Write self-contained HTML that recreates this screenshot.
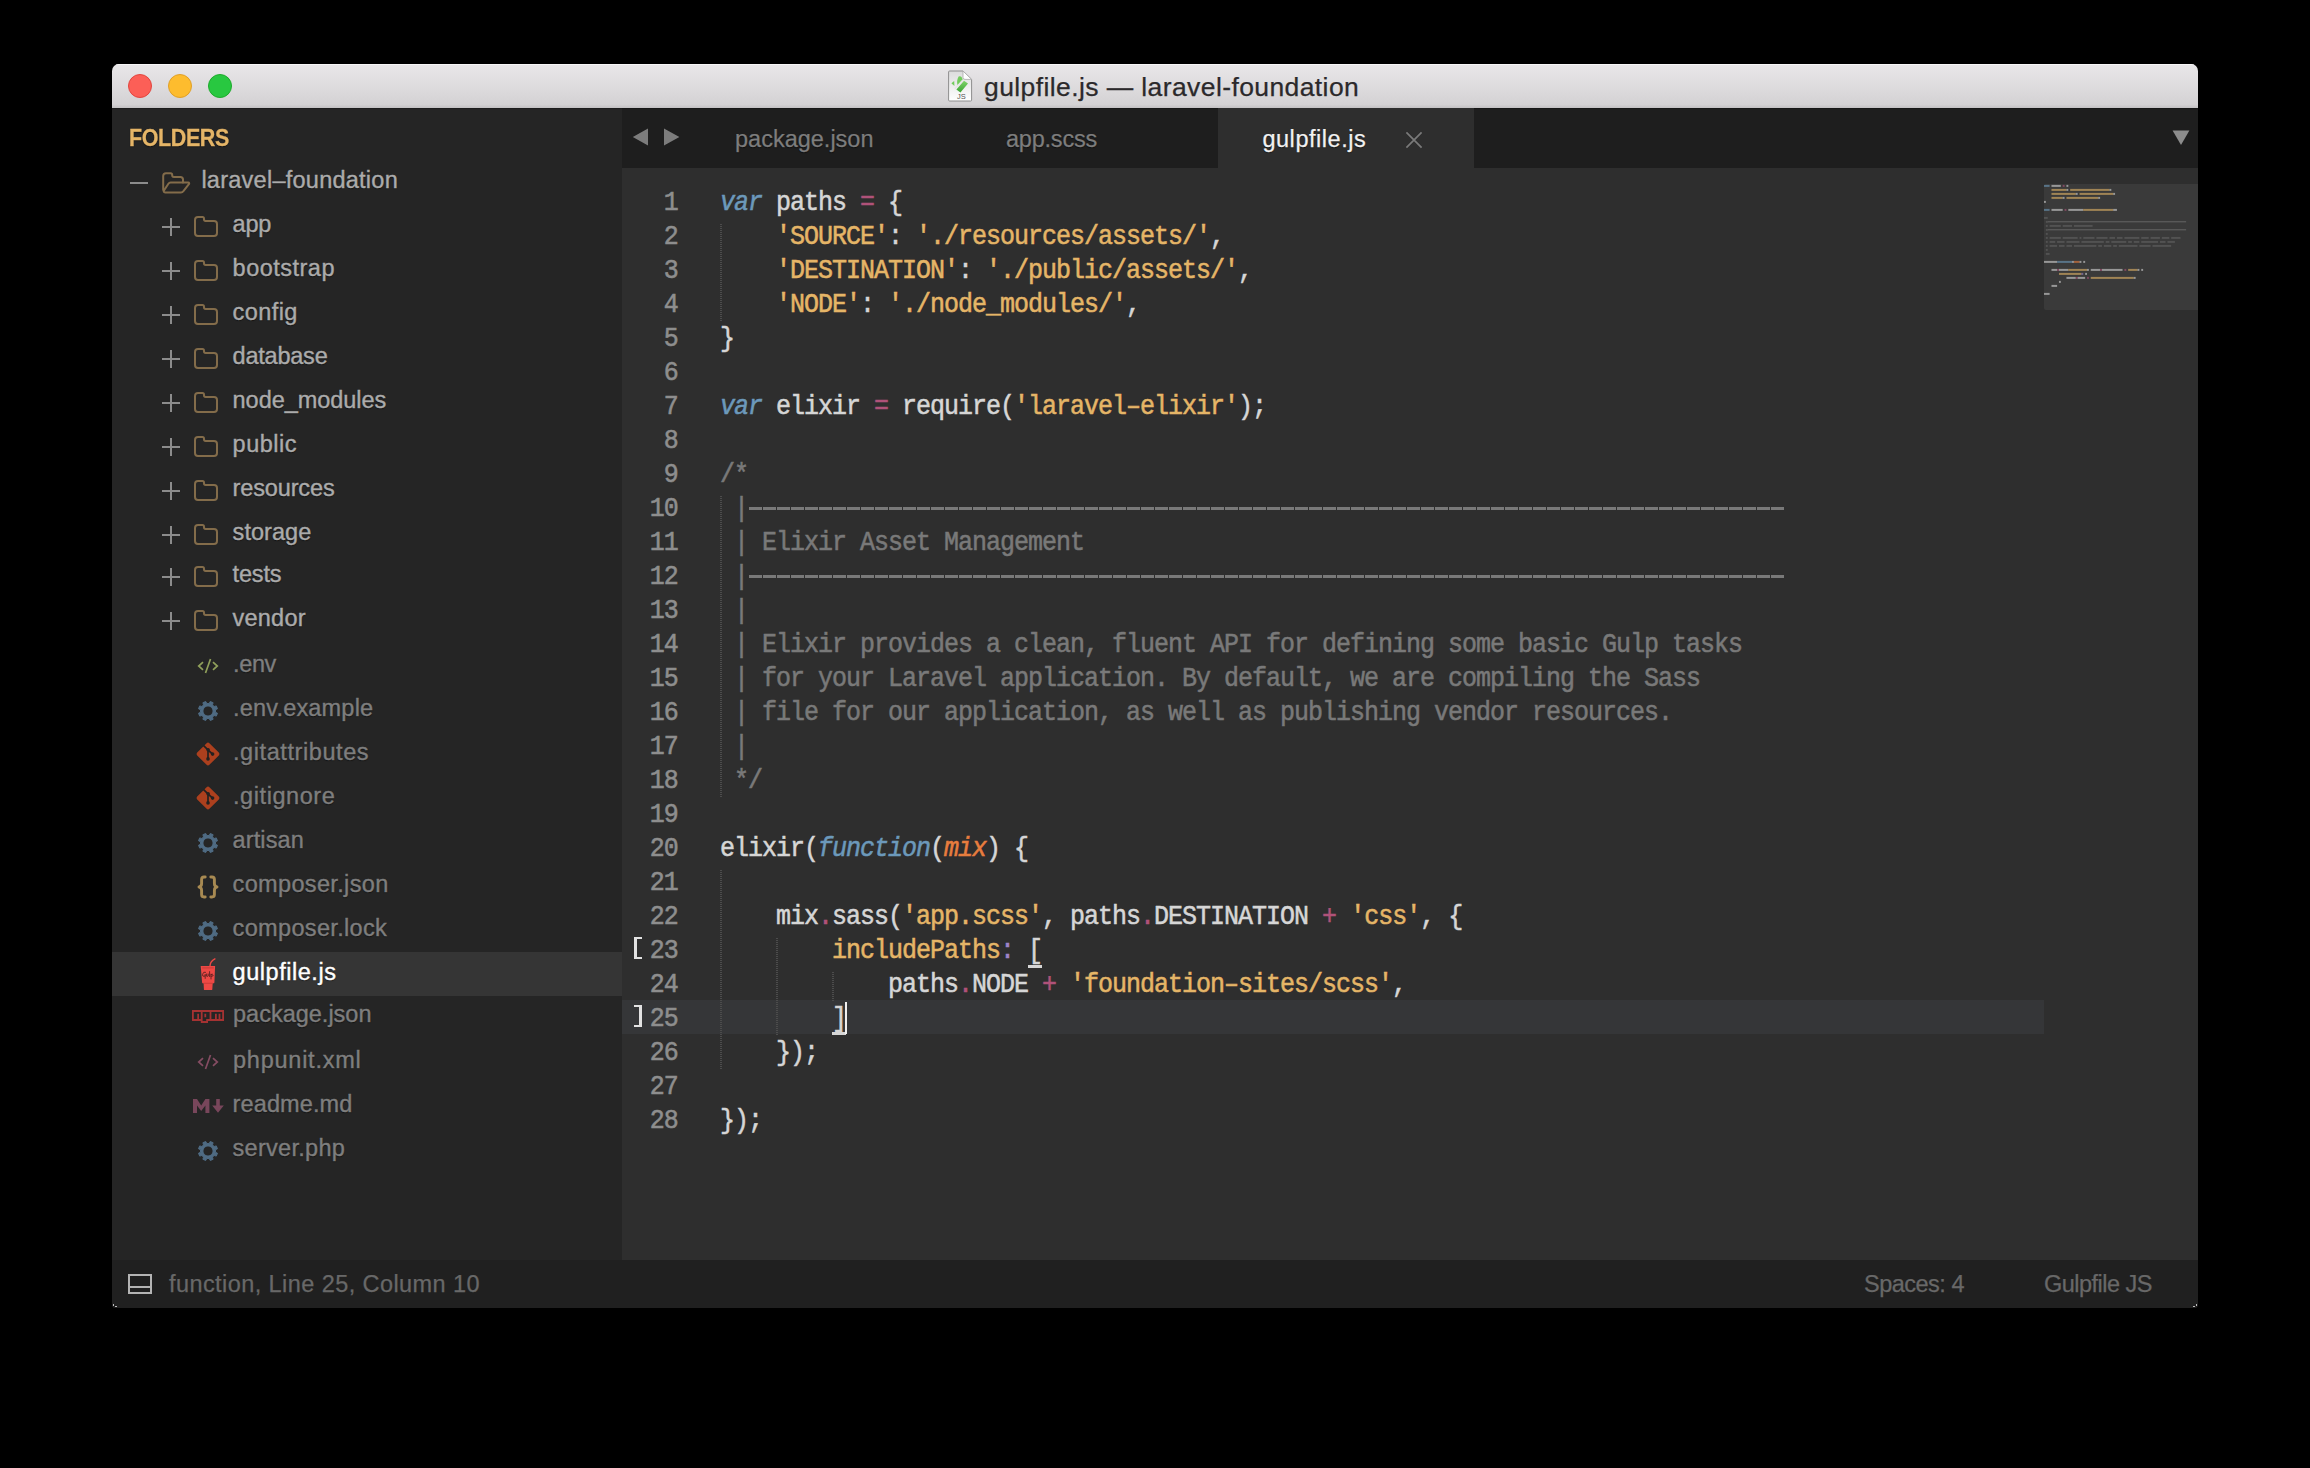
<!DOCTYPE html><html><head><meta charset="utf-8"><title>gulpfile.js</title><style>

html,body{margin:0;padding:0}
body{width:2310px;height:1468px;background:#000;position:relative;overflow:hidden;font-family:"Liberation Sans", sans-serif}
div,span,svg{position:absolute;box-sizing:border-box}
.t{white-space:pre;line-height:1;-webkit-text-stroke:0.25px}
.ln,.cl{font-family:"Liberation Mono", monospace;font-size:25.0px;letter-spacing:-1.0024px;white-space:pre;line-height:34px;height:34px;transform:translateY(2.6px) scaleY(1.12);transform-origin:0 23.7px}
.cl span{position:static}
.cl,.ln{-webkit-text-stroke:0.5px}
.ln{color:#8e8e8e;text-align:right;width:80px;left:485.802px}
.st{color:#6c99bb;font-style:italic} .par{color:#e87d3e;font-style:italic}
.fg{color:#d6d6d6} .com{color:#797979} .str{color:#e5b567} .kw{color:#b05279} .pur{color:#9e86c8}
.lab{-webkit-text-stroke:0.4px;font-size:23.5px;white-space:pre;line-height:28px;height:28px;text-shadow:0 1px 1px rgba(0,0,0,.55)}
.fo{color:#ababab} .fi{color:#7e7e7e} .sel{color:#fff}

</style></head><body>
<div id="win" style="left:112px;top:64px;width:2086px;height:1244px;border-radius:7px 7px 4px 4px;overflow:hidden;background:#2e2e2e">
<div style="left:0;top:0;width:2086px;height:44px;background:linear-gradient(#e9e7e9 0,#d4d2d4 92%,#c4c2c4 100%);box-shadow:inset 0 1px 0 #f7f6f7"></div>
<div style="left:16px;top:10px;width:24px;height:24px;border-radius:50%;background:#fc5f57;border:1px solid #e2463f"></div>
<div style="left:56px;top:10px;width:24px;height:24px;border-radius:50%;background:#fdbc2e;border:1px solid #e0a028"></div>
<div style="left:96px;top:10px;width:24px;height:24px;border-radius:50%;background:#28c840;border:1px solid #1eab2c"></div>
<svg style="left:835.5px;top:5.5px" width="25" height="32" viewBox="0 0 25 32"><defs><linearGradient id="dg" x1="0" y1="0" x2="0" y2="1"><stop offset="0" stop-color="#dcdcdc"/><stop offset="1" stop-color="#ffffff"/></linearGradient><linearGradient id="gg" x1="0" y1="0" x2="0" y2="1"><stop offset="0" stop-color="#7ed368"/><stop offset="1" stop-color="#3da535"/></linearGradient></defs><path d="M1.6 1 H15 L23.6 9.4 V30 Q23.6 31 22.6 31 H1.6 Q0.6 31 0.6 30 V2 Q0.6 1 1.6 1 Z" fill="url(#dg)" stroke="#8e8e8e" stroke-width="1"/><path d="M15 1 V7.4 Q15 9.4 17 9.4 H23.6 Z" fill="#fff" stroke="#a8a8a8" stroke-width=".8"/><path d="M10.6 6.6 Q13.6 5.4 14.6 9.6 L9.6 15.6 Q8.2 11.2 10.6 6.6 Z" fill="#72cc5c"/><path d="M3.4 13.2 L6.2 11 L6.4 16 Z" fill="#72cc5c"/><path d="M16 10.8 L20 13.6 L12.4 22.4 L8.4 19.6 Z" fill="url(#gg)"/><path d="M6.8 18.8 L14.6 10.4" stroke="#e6e6e6" stroke-width="1.4"/><text x="9" y="29" font-family="Liberation Sans" font-size="7.5" fill="#555">JS</text></svg>
<div class="t" id="title" style="left:872px;top:8px;font-size:26.5px;line-height:30px;color:#2b292b;letter-spacing:0.4px">gulpfile.js — laravel-foundation</div>
<div id="side" style="left:0;top:44px;width:510px;height:1152px;background:#252525;box-shadow:inset 0 1px 0 #1d1d1d"></div>
<div id="tabs" style="left:510px;top:44px;width:1576px;height:60px;background:#1e1e1e;box-shadow:inset 0 1px 0 #171717"></div>
<div id="atab" style="left:1106px;top:44px;width:256px;height:60px;background:#2e2e2e"></div>
<div id="status" style="left:0;top:1196px;width:2086px;height:48px;background:#202020"></div>
<div class="t" style="left:17px;top:62.5px;font-size:21.5px;letter-spacing:-0.4px;font-weight:bold;color:#e5b567;line-height:24px;transform:scaleY(1.08);transform-origin:0 20px;text-shadow:0 1px 1px rgba(0,0,0,.5)">FOLDERS</div>
<div style="left:18px;top:118px;width:18px;height:2px;background:#8c8c8c"></div>
<svg style="left:50px;top:108.4px" width="29" height="22" viewBox="0 0 29 22"><path d="M1.2 18 V4 Q1.2 1.2 4 1.2 H8.6 Q10.2 1.2 10.2 3 V3.6 Q10.2 5 11.8 5 H18.4 Q21 5 21 7.6 V10.4" fill="none" stroke="#836c4a" stroke-width="2" stroke-linejoin="round" stroke-linecap="round"/><path d="M8.6 10.6 H26.2 Q27.8 10.8 26.9 12.2 L21.4 19.2 Q20.4 20.4 19 20.4 H3.2 Q1 20.2 2 18.4 L6.4 11.8 Q7.2 10.6 8.6 10.6 Z" fill="none" stroke="#836c4a" stroke-width="2" stroke-linejoin="round"/></svg>
<div class="lab fo" style="left:89.4px;top:102px;letter-spacing:0.252px">laravel–foundation</div>
<div style="left:50px;top:162px;width:18px;height:2px;background:#8c8c8c"></div><div style="left:58px;top:154px;width:2px;height:18px;background:#8c8c8c"></div>
<svg style="left:82px;top:152.2px" width="24" height="21" viewBox="0 0 24 21"><path d="M1 4 Q1 1 4 1 H8.5 Q10 1 10 2.8 V3.6 Q10 5 11.6 5 H20 Q23 5 23 8 V17 Q23 20 20 20 H4 Q1 20 1 17 Z" fill="none" stroke="#836c4a" stroke-width="2" stroke-linejoin="round"/></svg>
<div class="lab fo" style="left:120.6px;top:146px;letter-spacing:-0.273px">app</div>
<div style="left:50px;top:206px;width:18px;height:2px;background:#8c8c8c"></div><div style="left:58px;top:198px;width:2px;height:18px;background:#8c8c8c"></div>
<svg style="left:82px;top:196.2px" width="24" height="21" viewBox="0 0 24 21"><path d="M1 4 Q1 1 4 1 H8.5 Q10 1 10 2.8 V3.6 Q10 5 11.6 5 H20 Q23 5 23 8 V17 Q23 20 20 20 H4 Q1 20 1 17 Z" fill="none" stroke="#836c4a" stroke-width="2" stroke-linejoin="round"/></svg>
<div class="lab fo" style="left:120.6px;top:190px;letter-spacing:0.491px">bootstrap</div>
<div style="left:50px;top:250px;width:18px;height:2px;background:#8c8c8c"></div><div style="left:58px;top:242px;width:2px;height:18px;background:#8c8c8c"></div>
<svg style="left:82px;top:240.2px" width="24" height="21" viewBox="0 0 24 21"><path d="M1 4 Q1 1 4 1 H8.5 Q10 1 10 2.8 V3.6 Q10 5 11.6 5 H20 Q23 5 23 8 V17 Q23 20 20 20 H4 Q1 20 1 17 Z" fill="none" stroke="#836c4a" stroke-width="2" stroke-linejoin="round"/></svg>
<div class="lab fo" style="left:120.6px;top:234px;letter-spacing:0.414px">config</div>
<div style="left:50px;top:294px;width:18px;height:2px;background:#8c8c8c"></div><div style="left:58px;top:286px;width:2px;height:18px;background:#8c8c8c"></div>
<svg style="left:82px;top:284.2px" width="24" height="21" viewBox="0 0 24 21"><path d="M1 4 Q1 1 4 1 H8.5 Q10 1 10 2.8 V3.6 Q10 5 11.6 5 H20 Q23 5 23 8 V17 Q23 20 20 20 H4 Q1 20 1 17 Z" fill="none" stroke="#836c4a" stroke-width="2" stroke-linejoin="round"/></svg>
<div class="lab fo" style="left:120.6px;top:278px;letter-spacing:-0.225px">database</div>
<div style="left:50px;top:338px;width:18px;height:2px;background:#8c8c8c"></div><div style="left:58px;top:330px;width:2px;height:18px;background:#8c8c8c"></div>
<svg style="left:82px;top:328.2px" width="24" height="21" viewBox="0 0 24 21"><path d="M1 4 Q1 1 4 1 H8.5 Q10 1 10 2.8 V3.6 Q10 5 11.6 5 H20 Q23 5 23 8 V17 Q23 20 20 20 H4 Q1 20 1 17 Z" fill="none" stroke="#836c4a" stroke-width="2" stroke-linejoin="round"/></svg>
<div class="lab fo" style="left:120.6px;top:322px;letter-spacing:-0.041px">node_modules</div>
<div style="left:50px;top:382px;width:18px;height:2px;background:#8c8c8c"></div><div style="left:58px;top:374px;width:2px;height:18px;background:#8c8c8c"></div>
<svg style="left:82px;top:372.2px" width="24" height="21" viewBox="0 0 24 21"><path d="M1 4 Q1 1 4 1 H8.5 Q10 1 10 2.8 V3.6 Q10 5 11.6 5 H20 Q23 5 23 8 V17 Q23 20 20 20 H4 Q1 20 1 17 Z" fill="none" stroke="#836c4a" stroke-width="2" stroke-linejoin="round"/></svg>
<div class="lab fo" style="left:120.6px;top:366px;letter-spacing:0.499px">public</div>
<div style="left:50px;top:426px;width:18px;height:2px;background:#8c8c8c"></div><div style="left:58px;top:418px;width:2px;height:18px;background:#8c8c8c"></div>
<svg style="left:82px;top:416.2px" width="24" height="21" viewBox="0 0 24 21"><path d="M1 4 Q1 1 4 1 H8.5 Q10 1 10 2.8 V3.6 Q10 5 11.6 5 H20 Q23 5 23 8 V17 Q23 20 20 20 H4 Q1 20 1 17 Z" fill="none" stroke="#836c4a" stroke-width="2" stroke-linejoin="round"/></svg>
<div class="lab fo" style="left:120.6px;top:410px;letter-spacing:-0.143px">resources</div>
<div style="left:50px;top:470px;width:18px;height:2px;background:#8c8c8c"></div><div style="left:58px;top:462px;width:2px;height:18px;background:#8c8c8c"></div>
<svg style="left:82px;top:460.20000000000005px" width="24" height="21" viewBox="0 0 24 21"><path d="M1 4 Q1 1 4 1 H8.5 Q10 1 10 2.8 V3.6 Q10 5 11.6 5 H20 Q23 5 23 8 V17 Q23 20 20 20 H4 Q1 20 1 17 Z" fill="none" stroke="#836c4a" stroke-width="2" stroke-linejoin="round"/></svg>
<div class="lab fo" style="left:120.6px;top:454px;letter-spacing:0.044px">storage</div>
<div style="left:50px;top:512px;width:18px;height:2px;background:#8c8c8c"></div><div style="left:58px;top:504px;width:2px;height:18px;background:#8c8c8c"></div>
<svg style="left:82px;top:502.20000000000005px" width="24" height="21" viewBox="0 0 24 21"><path d="M1 4 Q1 1 4 1 H8.5 Q10 1 10 2.8 V3.6 Q10 5 11.6 5 H20 Q23 5 23 8 V17 Q23 20 20 20 H4 Q1 20 1 17 Z" fill="none" stroke="#836c4a" stroke-width="2" stroke-linejoin="round"/></svg>
<div class="lab fo" style="left:120.6px;top:496px;letter-spacing:-0.168px">tests</div>
<div style="left:50px;top:556px;width:18px;height:2px;background:#8c8c8c"></div><div style="left:58px;top:548px;width:2px;height:18px;background:#8c8c8c"></div>
<svg style="left:82px;top:546.2px" width="24" height="21" viewBox="0 0 24 21"><path d="M1 4 Q1 1 4 1 H8.5 Q10 1 10 2.8 V3.6 Q10 5 11.6 5 H20 Q23 5 23 8 V17 Q23 20 20 20 H4 Q1 20 1 17 Z" fill="none" stroke="#836c4a" stroke-width="2" stroke-linejoin="round"/></svg>
<div class="lab fo" style="left:120.6px;top:540px;letter-spacing:0.207px">vendor</div>
<svg style="left:85px;top:592.5px" width="22" height="18" viewBox="-11 -9 22 18"><path d="M-5 -3.9 L-9.3 0 L-5 3.9 M5 -3.9 L9.3 0 L5 3.9 M2.5 -7 L-2.5 7" fill="none" stroke="#8f9f5a" stroke-width="1.7"/></svg>
<div class="lab fi" style="left:121.0px;top:586px;letter-spacing:-0.355px">.env</div>
<svg style="left:85px;top:636px" width="22" height="22" viewBox="0 0 22 22"><path d="M12.19 3.49 L13.25 1.51 L16.12 2.70 L15.46 4.85 L17.15 6.54 L19.30 5.88 L20.49 8.75 L18.51 9.81 L18.51 12.19 L20.49 13.25 L19.30 16.12 L17.15 15.46 L15.46 17.15 L16.12 19.30 L13.25 20.49 L12.19 18.51 L9.81 18.51 L8.75 20.49 L5.88 19.30 L6.54 17.15 L4.85 15.46 L2.70 16.12 L1.51 13.25 L3.49 12.19 L3.49 9.81 L1.51 8.75 L2.70 5.88 L4.85 6.54 L6.54 4.85 L5.88 2.70 L8.75 1.51 L9.81 3.49 Z M11 5.9 A5.1 5.1 0 1 0 11 16.1 A5.1 5.1 0 1 0 11 5.9 Z" fill="#4f6b83" fill-rule="evenodd" stroke="#4f6b83" stroke-width="1" stroke-linejoin="round"/></svg>
<div class="lab fi" style="left:121.0px;top:630px;letter-spacing:0.189px">.env.example</div>
<svg style="left:84px;top:678.2px" width="24" height="24" viewBox="0 0 24 24"><path d="M12 0.6 Q12.8 0.6 13.4 1.2 L22.8 10.6 Q23.4 11.2 23.4 12 Q23.4 12.8 22.8 13.4 L13.4 22.8 Q12.8 23.4 12 23.4 Q11.2 23.4 10.6 22.8 L1.2 13.4 Q0.6 12.8 0.6 12 Q0.6 11.2 1.2 10.6 L10.6 1.2 Q11.2 0.6 12 0.6 Z" fill="#ac401e"/><path d="M7.6 3.6 L12 7.8 V16.8 M12.2 8.2 L16.4 12" fill="none" stroke="#232120" stroke-width="1.7"/><circle cx="12.1" cy="7.7" r="1.8" fill="#232120"/><circle cx="12" cy="16.9" r="1.8" fill="#232120"/><circle cx="16.6" cy="12.1" r="1.8" fill="#232120"/></svg>
<div class="lab fi" style="left:121.0px;top:674px;letter-spacing:0.585px">.gitattributes</div>
<svg style="left:84px;top:722.2px" width="24" height="24" viewBox="0 0 24 24"><path d="M12 0.6 Q12.8 0.6 13.4 1.2 L22.8 10.6 Q23.4 11.2 23.4 12 Q23.4 12.8 22.8 13.4 L13.4 22.8 Q12.8 23.4 12 23.4 Q11.2 23.4 10.6 22.8 L1.2 13.4 Q0.6 12.8 0.6 12 Q0.6 11.2 1.2 10.6 L10.6 1.2 Q11.2 0.6 12 0.6 Z" fill="#ac401e"/><path d="M7.6 3.6 L12 7.8 V16.8 M12.2 8.2 L16.4 12" fill="none" stroke="#232120" stroke-width="1.7"/><circle cx="12.1" cy="7.7" r="1.8" fill="#232120"/><circle cx="12" cy="16.9" r="1.8" fill="#232120"/><circle cx="16.6" cy="12.1" r="1.8" fill="#232120"/></svg>
<div class="lab fi" style="left:121.0px;top:718px;letter-spacing:0.571px">.gitignore</div>
<svg style="left:85px;top:768px" width="22" height="22" viewBox="0 0 22 22"><path d="M12.19 3.49 L13.25 1.51 L16.12 2.70 L15.46 4.85 L17.15 6.54 L19.30 5.88 L20.49 8.75 L18.51 9.81 L18.51 12.19 L20.49 13.25 L19.30 16.12 L17.15 15.46 L15.46 17.15 L16.12 19.30 L13.25 20.49 L12.19 18.51 L9.81 18.51 L8.75 20.49 L5.88 19.30 L6.54 17.15 L4.85 15.46 L2.70 16.12 L1.51 13.25 L3.49 12.19 L3.49 9.81 L1.51 8.75 L2.70 5.88 L4.85 6.54 L6.54 4.85 L5.88 2.70 L8.75 1.51 L9.81 3.49 Z M11 5.9 A5.1 5.1 0 1 0 11 16.1 A5.1 5.1 0 1 0 11 5.9 Z" fill="#4f6b83" fill-rule="evenodd" stroke="#4f6b83" stroke-width="1" stroke-linejoin="round"/></svg>
<div class="lab fi" style="left:120.6px;top:762px;letter-spacing:0.108px">artisan</div>
<svg style="left:85px;top:811px" width="22" height="24" viewBox="0 0 22 24"><path d="M8.2 2 H7 Q4.6 2 4.6 4.4 V8.6 Q4.6 11.6 2 12 Q4.6 12.4 4.6 15.4 V19.6 Q4.6 22 7 22 H8.2" fill="none" stroke="#a88a52" stroke-width="2.9" stroke-linecap="round" stroke-linejoin="round"/><path d="M13.8 2 H15 Q17.4 2 17.4 4.4 V8.6 Q17.4 11.6 20 12 Q17.4 12.4 17.4 15.4 V19.6 Q17.4 22 15 22 H13.8" fill="none" stroke="#a88a52" stroke-width="2.9" stroke-linecap="round" stroke-linejoin="round"/></svg>
<div class="lab fi" style="left:120.6px;top:806px;letter-spacing:0.344px">composer.json</div>
<svg style="left:85px;top:856px" width="22" height="22" viewBox="0 0 22 22"><path d="M12.19 3.49 L13.25 1.51 L16.12 2.70 L15.46 4.85 L17.15 6.54 L19.30 5.88 L20.49 8.75 L18.51 9.81 L18.51 12.19 L20.49 13.25 L19.30 16.12 L17.15 15.46 L15.46 17.15 L16.12 19.30 L13.25 20.49 L12.19 18.51 L9.81 18.51 L8.75 20.49 L5.88 19.30 L6.54 17.15 L4.85 15.46 L2.70 16.12 L1.51 13.25 L3.49 12.19 L3.49 9.81 L1.51 8.75 L2.70 5.88 L4.85 6.54 L6.54 4.85 L5.88 2.70 L8.75 1.51 L9.81 3.49 Z M11 5.9 A5.1 5.1 0 1 0 11 16.1 A5.1 5.1 0 1 0 11 5.9 Z" fill="#4f6b83" fill-rule="evenodd" stroke="#4f6b83" stroke-width="1" stroke-linejoin="round"/></svg>
<div class="lab fi" style="left:120.6px;top:850px;letter-spacing:0.338px">composer.lock</div>
<div style="left:0;top:888px;width:510px;height:44px;background:#353535"></div>
<svg style="left:88px;top:893.8px" width="17" height="34" viewBox="0 0 17 34"><path d="M9.9 8.6 Q10.2 5.2 11.2 4 Q12.6 2.2 14.9 0.9" fill="none" stroke="#ee4945" stroke-width="1.4" stroke-linecap="round"/><path d="M0.7 8 H15.1 L14.4 24.4 Q14.3 25.2 13.4 25.3 H12.7 L12.3 31.4 Q12.2 32.1 11.4 32.1 H4.8 Q4 32.1 3.9 31.4 L3.6 25.3 H3 Q2.2 25.2 2.1 24.4 Z" fill="#ee4945"/><path d="M2.2 9.9 H13.8" stroke="#b93531" stroke-width="0.7" fill="none"/><path d="M3.6 25.3 H12.7" stroke="#c53a36" stroke-width="0.8" fill="none"/><path d="M5.6 14.2 Q3.4 13.2 2.6 16.2 Q2.2 18.6 4.2 18.4 Q5.4 18 5.2 16.4 V20.4 M6.6 16 V18.2 Q7.4 18.8 8.2 18 V16 M9.6 13.6 V18.6 M11 16.2 V21 M11 16.6 Q12.6 15.4 13.2 17 Q13.2 18.6 11.2 18.4" fill="none" stroke="#5b2020" stroke-width="0.9" stroke-linecap="round"/></svg>
<div class="lab sel" style="left:120.6px;top:894px;letter-spacing:0.538px">gulpfile.js</div>
<svg style="left:80px;top:946.0px" width="32" height="14" viewBox="0 0 32 14"><path d="M0 0 H32 V11 H16 V13 H8.8 V11 H0 Z" fill="#a53232"/><path d="M1.8 1.9 H8.8 V9.1 H7 V3.8 H5.3 V9.1 H1.8 Z M10.6 1.9 H17.6 V9.1 H14.2 V11 H10.6 Z M12.4 3.8 V7.2 H14.2 V3.8 Z M19.4 1.9 H30.2 V9.1 H28.4 V3.8 H26.6 V9.1 H24.8 V3.8 H23 V9.1 H19.4 Z" fill="#252525" fill-rule="evenodd"/></svg>
<div class="lab fi" style="left:121.0px;top:936px;letter-spacing:0.000px">package.json</div>
<svg style="left:85px;top:988.5px" width="22" height="18" viewBox="-11 -9 22 18"><path d="M-5 -3.9 L-9.3 0 L-5 3.9 M5 -3.9 L9.3 0 L5 3.9 M2.5 -7 L-2.5 7" fill="none" stroke="#844c62" stroke-width="1.7"/></svg>
<div class="lab fi" style="left:121.0px;top:982px;letter-spacing:0.756px">phpunit.xml</div>
<svg style="left:80.5px;top:1035px" width="31" height="14" viewBox="0 0 31 14"><path d="M0 14 V0 H4 L8.2 6.4 L12.4 0 H16.4 V14 H12.4 V6.4 L8.2 12 L4 6.4 V14 Z" fill="#78465b"/><path d="M23.2 0 H26.8 V6.6 H30.8 L25 13.8 L19.2 6.6 H23.2 Z" fill="#78465b"/></svg>
<div class="lab fi" style="left:120.6px;top:1026px;letter-spacing:0.116px">readme.md</div>
<svg style="left:85px;top:1076px" width="22" height="22" viewBox="0 0 22 22"><path d="M12.19 3.49 L13.25 1.51 L16.12 2.70 L15.46 4.85 L17.15 6.54 L19.30 5.88 L20.49 8.75 L18.51 9.81 L18.51 12.19 L20.49 13.25 L19.30 16.12 L17.15 15.46 L15.46 17.15 L16.12 19.30 L13.25 20.49 L12.19 18.51 L9.81 18.51 L8.75 20.49 L5.88 19.30 L6.54 17.15 L4.85 15.46 L2.70 16.12 L1.51 13.25 L3.49 12.19 L3.49 9.81 L1.51 8.75 L2.70 5.88 L4.85 6.54 L6.54 4.85 L5.88 2.70 L8.75 1.51 L9.81 3.49 Z M11 5.9 A5.1 5.1 0 1 0 11 16.1 A5.1 5.1 0 1 0 11 5.9 Z" fill="#4f6b83" fill-rule="evenodd" stroke="#4f6b83" stroke-width="1" stroke-linejoin="round"/></svg>
<div class="lab fi" style="left:120.6px;top:1070px;letter-spacing:0.277px">server.php</div>
<svg style="left:520px;top:64px" width="50" height="18" viewBox="0 0 50 18"><path d="M16 0.6 V17.4 L0.8 9 Z M32 0.6 V17.4 L47.4 9 Z" fill="#7c7c7c"/></svg>
<div class="t" style="left:623.0px;top:61px;font-size:23.5px;line-height:28px;color:#7d7d7d;letter-spacing:0.000px;text-shadow:0 1px 1px rgba(0,0,0,.6)">package.json</div>
<div class="t" style="left:894.0px;top:61px;font-size:23.5px;line-height:28px;color:#7d7d7d;letter-spacing:-0.219px;text-shadow:0 1px 1px rgba(0,0,0,.6)">app.scss</div>
<div class="t" style="left:1150.4px;top:61px;font-size:23.5px;line-height:28px;color:#f2f2f2;letter-spacing:0.547px;text-shadow:0 1px 1px rgba(0,0,0,.6)">gulpfile.js</div>
<svg style="left:1293px;top:67px" width="18" height="18" viewBox="0 0 18 18"><path d="M1.4 1.4 L16.6 16.6 M16.6 1.4 L1.4 16.6" stroke="#7a7a7a" stroke-width="1.7" fill="none"/></svg>
<svg style="left:2060px;top:66px" width="18" height="16" viewBox="0 0 18 16"><path d="M0.6 0.6 H17.4 L9 15 Z" fill="#8c8c8c"/></svg>
<div style="left:510px;top:936px;width:1422px;height:34px;background:#353638"></div>
<div style="left:608px;top:160px;width:2px;height:97px;background:repeating-linear-gradient(#4c4c4c 0 1px,transparent 1px 2px)"></div>
<div style="left:608px;top:432px;width:2px;height:301px;background:repeating-linear-gradient(#4c4c4c 0 1px,transparent 1px 2px)"></div>
<div style="left:608px;top:806px;width:2px;height:199px;background:repeating-linear-gradient(#4c4c4c 0 1px,transparent 1px 2px)"></div>
<div style="left:664px;top:874px;width:2px;height:97px;background:repeating-linear-gradient(#4c4c4c 0 1px,transparent 1px 2px)"></div>
<div style="left:720px;top:908px;width:2px;height:29px;background:repeating-linear-gradient(#4c4c4c 0 1px,transparent 1px 2px)"></div>
<div class="ln" style="top:120px">1</div>
<div class="ln" style="top:154px">2</div>
<div class="ln" style="top:188px">3</div>
<div class="ln" style="top:222px">4</div>
<div class="ln" style="top:256px">5</div>
<div class="ln" style="top:290px">6</div>
<div class="ln" style="top:324px">7</div>
<div class="ln" style="top:358px">8</div>
<div class="ln" style="top:392px">9</div>
<div class="ln" style="top:426px">10</div>
<div class="ln" style="top:460px">11</div>
<div class="ln" style="top:494px">12</div>
<div class="ln" style="top:528px">13</div>
<div class="ln" style="top:562px">14</div>
<div class="ln" style="top:596px">15</div>
<div class="ln" style="top:630px">16</div>
<div class="ln" style="top:664px">17</div>
<div class="ln" style="top:698px">18</div>
<div class="ln" style="top:732px">19</div>
<div class="ln" style="top:766px">20</div>
<div class="ln" style="top:800px">21</div>
<div class="ln" style="top:834px">22</div>
<div class="ln" style="top:868px">23</div>
<div class="ln" style="top:902px">24</div>
<div class="ln" style="top:936px">25</div>
<div class="ln" style="top:970px">26</div>
<div class="ln" style="top:1004px">27</div>
<div class="ln" style="top:1038px">28</div>
<div style="left:522px;top:873px;width:3px;height:22px;background:#e2e2e2"></div>
<div style="left:522px;top:873px;width:8.2px;height:2.4px;background:#e2e2e2"></div>
<div style="left:522px;top:892.6px;width:8.2px;height:2.4px;background:#e2e2e2"></div>
<div style="left:527.2px;top:941px;width:3px;height:22px;background:#e2e2e2"></div>
<div style="left:522px;top:941px;width:8.2px;height:2.4px;background:#e2e2e2"></div>
<div style="left:522px;top:960.5999999999999px;width:8.2px;height:2.4px;background:#e2e2e2"></div>
<div class="cl" style="left:608px;top:120px"><span class="st">var</span><span class="fg"> paths </span><span class="kw">=</span><span class="fg"> {</span></div>
<div class="cl" style="left:608px;top:154px"><span class="fg">    </span><span class="str">'SOURCE'</span><span class="fg">: </span><span class="str">'./resources/assets/'</span><span class="fg">,</span></div>
<div class="cl" style="left:608px;top:188px"><span class="fg">    </span><span class="str">'DESTINATION'</span><span class="fg">: </span><span class="str">'./public/assets/'</span><span class="fg">,</span></div>
<div class="cl" style="left:608px;top:222px"><span class="fg">    </span><span class="str">'NODE'</span><span class="fg">: </span><span class="str">'./node_modules/'</span><span class="fg">,</span></div>
<div class="cl" style="left:608px;top:256px"><span class="fg">}</span></div>
<div class="cl" style="left:608px;top:324px"><span class="st">var</span><span class="fg"> elixir </span><span class="kw">=</span><span class="fg"> require(</span><span class="str">'laravel–elixir'</span><span class="fg">);</span></div>
<div class="cl" style="left:608px;top:392px"><span class="com">/*</span></div>
<div style="left:637.0px;top:443px;width:1035.0px;height:3px;background:repeating-linear-gradient(90deg,#797979 0 13px,transparent 13px 14px)"></div>
<div class="cl" style="left:608px;top:426px"><span class="com"> |</span></div>
<div class="cl" style="left:608px;top:460px"><span class="com"> | Elixir Asset Management</span></div>
<div style="left:637.0px;top:511px;width:1035.0px;height:3px;background:repeating-linear-gradient(90deg,#797979 0 13px,transparent 13px 14px)"></div>
<div class="cl" style="left:608px;top:494px"><span class="com"> |</span></div>
<div class="cl" style="left:608px;top:528px"><span class="com"> |</span></div>
<div class="cl" style="left:608px;top:562px"><span class="com"> | Elixir provides a clean, fluent API for defining some basic Gulp tasks</span></div>
<div class="cl" style="left:608px;top:596px"><span class="com"> | for your Laravel application. By default, we are compiling the Sass</span></div>
<div class="cl" style="left:608px;top:630px"><span class="com"> | file for our application, as well as publishing vendor resources.</span></div>
<div class="cl" style="left:608px;top:664px"><span class="com"> |</span></div>
<div class="cl" style="left:608px;top:698px"><span class="com"> */</span></div>
<div class="cl" style="left:608px;top:766px"><span class="fg">elixir(</span><span class="st">function</span><span class="fg">(</span><span class="par">mix</span><span class="fg">) {</span></div>
<div class="cl" style="left:608px;top:834px"><span class="fg">    mix</span><span class="kw">.</span><span class="fg">sass(</span><span class="str">'app.scss'</span><span class="fg">, paths</span><span class="kw">.</span><span class="fg">DESTINATION </span><span class="kw">+</span><span class="fg"> </span><span class="str">'css'</span><span class="fg">, {</span></div>
<div class="cl" style="left:608px;top:868px"><span class="fg">        </span><span class="str">includePaths</span><span class="pur">:</span><span class="fg"> [</span></div>
<div class="cl" style="left:608px;top:902px"><span class="fg">            paths</span><span class="kw">.</span><span class="fg">NODE </span><span class="kw">+</span><span class="fg"> </span><span class="str">'foundation–sites/scss'</span><span class="fg">,</span></div>
<div class="cl" style="left:608px;top:936px"><span class="fg">        ]</span></div>
<div class="cl" style="left:608px;top:970px"><span class="fg">    });</span></div>
<div class="cl" style="left:608px;top:1038px"><span class="fg">});</span></div>
<div style="left:916px;top:901px;width:14px;height:3px;background:#d6d6d6"></div>
<div style="left:720px;top:968px;width:14px;height:3px;background:#d6d6d6"></div>
<div style="left:732.5px;top:938px;width:2px;height:32px;background:#f0f0f0"></div>
<div style="left:1932px;top:120px;width:154px;height:126px;background:#3a3a3a;border-radius:2px 0 0 2px"></div>
<svg style="left:1932px;top:120px;filter:blur(0.4px)" width="154" height="126" viewBox="0 0 154 126"><rect x="0.00" y="0.90" width="5.61" height="2" fill="#6c99bb" opacity=".6"/><rect x="7.48" y="0.90" width="9.35" height="2" fill="#d6d6d6" opacity=".6"/><rect x="18.70" y="0.90" width="1.87" height="2" fill="#b05279" opacity=".6"/><rect x="22.44" y="0.90" width="1.87" height="2" fill="#d6d6d6" opacity=".6"/><rect x="7.48" y="4.90" width="14.96" height="2" fill="#e5b567" opacity=".6"/><rect x="22.44" y="4.90" width="1.87" height="2" fill="#d6d6d6" opacity=".6"/><rect x="26.18" y="4.90" width="39.27" height="2" fill="#e5b567" opacity=".6"/><rect x="65.45" y="4.90" width="1.87" height="2" fill="#d6d6d6" opacity=".6"/><rect x="7.48" y="8.90" width="24.31" height="2" fill="#e5b567" opacity=".6"/><rect x="31.79" y="8.90" width="1.87" height="2" fill="#d6d6d6" opacity=".6"/><rect x="35.53" y="8.90" width="33.66" height="2" fill="#e5b567" opacity=".6"/><rect x="69.19" y="8.90" width="1.87" height="2" fill="#d6d6d6" opacity=".6"/><rect x="7.48" y="12.90" width="11.22" height="2" fill="#e5b567" opacity=".6"/><rect x="18.70" y="12.90" width="1.87" height="2" fill="#d6d6d6" opacity=".6"/><rect x="22.44" y="12.90" width="31.79" height="2" fill="#e5b567" opacity=".6"/><rect x="54.23" y="12.90" width="1.87" height="2" fill="#d6d6d6" opacity=".6"/><rect x="0.00" y="16.90" width="1.87" height="2" fill="#d6d6d6" opacity=".6"/><rect x="0.00" y="24.90" width="5.61" height="2" fill="#6c99bb" opacity=".6"/><rect x="7.48" y="24.90" width="11.22" height="2" fill="#d6d6d6" opacity=".6"/><rect x="20.57" y="24.90" width="1.87" height="2" fill="#b05279" opacity=".6"/><rect x="24.31" y="24.90" width="14.96" height="2" fill="#d6d6d6" opacity=".6"/><rect x="39.27" y="24.90" width="29.92" height="2" fill="#e5b567" opacity=".6"/><rect x="69.19" y="24.90" width="3.74" height="2" fill="#d6d6d6" opacity=".6"/><rect x="0.00" y="32.90" width="3.74" height="2" fill="#797979" opacity=".38"/><rect x="1.87" y="36.90" width="1.87" height="2" fill="#797979" opacity=".38"/><rect x="3.74" y="37.30" width="138.38" height="1" fill="#797979" opacity=".7"/><rect x="1.87" y="40.90" width="1.87" height="2" fill="#797979" opacity=".38"/><rect x="5.61" y="40.90" width="11.22" height="2" fill="#797979" opacity=".38"/><rect x="18.70" y="40.90" width="9.35" height="2" fill="#797979" opacity=".38"/><rect x="29.92" y="40.90" width="18.70" height="2" fill="#797979" opacity=".38"/><rect x="1.87" y="44.90" width="1.87" height="2" fill="#797979" opacity=".38"/><rect x="3.74" y="45.30" width="138.38" height="1" fill="#797979" opacity=".7"/><rect x="1.87" y="48.90" width="1.87" height="2" fill="#797979" opacity=".38"/><rect x="1.87" y="52.90" width="1.87" height="2" fill="#797979" opacity=".38"/><rect x="5.61" y="52.90" width="11.22" height="2" fill="#797979" opacity=".38"/><rect x="18.70" y="52.90" width="14.96" height="2" fill="#797979" opacity=".38"/><rect x="35.53" y="52.90" width="1.87" height="2" fill="#797979" opacity=".38"/><rect x="39.27" y="52.90" width="11.22" height="2" fill="#797979" opacity=".38"/><rect x="52.36" y="52.90" width="11.22" height="2" fill="#797979" opacity=".38"/><rect x="65.45" y="52.90" width="5.61" height="2" fill="#797979" opacity=".38"/><rect x="72.93" y="52.90" width="5.61" height="2" fill="#797979" opacity=".38"/><rect x="80.41" y="52.90" width="14.96" height="2" fill="#797979" opacity=".38"/><rect x="97.24" y="52.90" width="7.48" height="2" fill="#797979" opacity=".38"/><rect x="106.59" y="52.90" width="9.35" height="2" fill="#797979" opacity=".38"/><rect x="117.81" y="52.90" width="7.48" height="2" fill="#797979" opacity=".38"/><rect x="127.16" y="52.90" width="9.35" height="2" fill="#797979" opacity=".38"/><rect x="1.87" y="56.90" width="1.87" height="2" fill="#797979" opacity=".38"/><rect x="5.61" y="56.90" width="5.61" height="2" fill="#797979" opacity=".38"/><rect x="13.09" y="56.90" width="7.48" height="2" fill="#797979" opacity=".38"/><rect x="22.44" y="56.90" width="13.09" height="2" fill="#797979" opacity=".38"/><rect x="37.40" y="56.90" width="22.44" height="2" fill="#797979" opacity=".38"/><rect x="61.71" y="56.90" width="3.74" height="2" fill="#797979" opacity=".38"/><rect x="67.32" y="56.90" width="14.96" height="2" fill="#797979" opacity=".38"/><rect x="84.15" y="56.90" width="3.74" height="2" fill="#797979" opacity=".38"/><rect x="89.76" y="56.90" width="5.61" height="2" fill="#797979" opacity=".38"/><rect x="97.24" y="56.90" width="16.83" height="2" fill="#797979" opacity=".38"/><rect x="115.94" y="56.90" width="5.61" height="2" fill="#797979" opacity=".38"/><rect x="123.42" y="56.90" width="7.48" height="2" fill="#797979" opacity=".38"/><rect x="1.87" y="60.90" width="1.87" height="2" fill="#797979" opacity=".38"/><rect x="5.61" y="60.90" width="7.48" height="2" fill="#797979" opacity=".38"/><rect x="14.96" y="60.90" width="5.61" height="2" fill="#797979" opacity=".38"/><rect x="22.44" y="60.90" width="5.61" height="2" fill="#797979" opacity=".38"/><rect x="29.92" y="60.90" width="22.44" height="2" fill="#797979" opacity=".38"/><rect x="54.23" y="60.90" width="3.74" height="2" fill="#797979" opacity=".38"/><rect x="59.84" y="60.90" width="7.48" height="2" fill="#797979" opacity=".38"/><rect x="69.19" y="60.90" width="3.74" height="2" fill="#797979" opacity=".38"/><rect x="74.80" y="60.90" width="18.70" height="2" fill="#797979" opacity=".38"/><rect x="95.37" y="60.90" width="11.22" height="2" fill="#797979" opacity=".38"/><rect x="108.46" y="60.90" width="18.70" height="2" fill="#797979" opacity=".38"/><rect x="1.87" y="64.90" width="1.87" height="2" fill="#797979" opacity=".38"/><rect x="1.87" y="68.90" width="3.74" height="2" fill="#797979" opacity=".38"/><rect x="0.00" y="76.90" width="13.09" height="2" fill="#d6d6d6" opacity=".6"/><rect x="13.09" y="76.90" width="14.96" height="2" fill="#6c99bb" opacity=".6"/><rect x="28.05" y="76.90" width="1.87" height="2" fill="#d6d6d6" opacity=".6"/><rect x="29.92" y="76.90" width="5.61" height="2" fill="#e87d3e" opacity=".6"/><rect x="35.53" y="76.90" width="1.87" height="2" fill="#d6d6d6" opacity=".6"/><rect x="39.27" y="76.90" width="1.87" height="2" fill="#d6d6d6" opacity=".6"/><rect x="7.48" y="84.90" width="5.61" height="2" fill="#d6d6d6" opacity=".6"/><rect x="13.09" y="84.90" width="1.87" height="2" fill="#b05279" opacity=".6"/><rect x="14.96" y="84.90" width="9.35" height="2" fill="#d6d6d6" opacity=".6"/><rect x="24.31" y="84.90" width="18.70" height="2" fill="#e5b567" opacity=".6"/><rect x="43.01" y="84.90" width="1.87" height="2" fill="#d6d6d6" opacity=".6"/><rect x="46.75" y="84.90" width="9.35" height="2" fill="#d6d6d6" opacity=".6"/><rect x="56.10" y="84.90" width="1.87" height="2" fill="#b05279" opacity=".6"/><rect x="57.97" y="84.90" width="20.57" height="2" fill="#d6d6d6" opacity=".6"/><rect x="80.41" y="84.90" width="1.87" height="2" fill="#b05279" opacity=".6"/><rect x="84.15" y="84.90" width="9.35" height="2" fill="#e5b567" opacity=".6"/><rect x="93.50" y="84.90" width="1.87" height="2" fill="#d6d6d6" opacity=".6"/><rect x="97.24" y="84.90" width="1.87" height="2" fill="#d6d6d6" opacity=".6"/><rect x="14.96" y="88.90" width="22.44" height="2" fill="#e5b567" opacity=".6"/><rect x="37.40" y="88.90" width="1.87" height="2" fill="#9e86c8" opacity=".6"/><rect x="41.14" y="88.90" width="1.87" height="2" fill="#d6d6d6" opacity=".6"/><rect x="22.44" y="92.90" width="9.35" height="2" fill="#d6d6d6" opacity=".6"/><rect x="31.79" y="92.90" width="1.87" height="2" fill="#b05279" opacity=".6"/><rect x="33.66" y="92.90" width="7.48" height="2" fill="#d6d6d6" opacity=".6"/><rect x="43.01" y="92.90" width="1.87" height="2" fill="#b05279" opacity=".6"/><rect x="46.75" y="92.90" width="43.01" height="2" fill="#e5b567" opacity=".6"/><rect x="89.76" y="92.90" width="1.87" height="2" fill="#d6d6d6" opacity=".6"/><rect x="14.96" y="96.90" width="1.87" height="2" fill="#d6d6d6" opacity=".6"/><rect x="7.48" y="100.90" width="5.61" height="2" fill="#d6d6d6" opacity=".6"/><rect x="0.00" y="108.90" width="5.61" height="2" fill="#d6d6d6" opacity=".6"/></svg>
<div style="left:16px;top:1210px;width:24px;height:20px;border:2px solid #b4b4b4"></div>
<div style="left:17px;top:1222px;width:22px;height:2px;background:#b4b4b4"></div>
<div class="t" style="left:57.0px;top:1206px;font-size:23.5px;line-height:28px;color:#686868;letter-spacing:0.422px">function, Line 25, Column 10</div>
<div class="t" style="left:1752.0px;top:1206px;font-size:23.5px;line-height:28px;color:#686868;letter-spacing:-0.502px">Spaces: 4</div>
<div class="t" style="left:1932.0px;top:1206px;font-size:23.5px;line-height:28px;color:#686868;letter-spacing:-0.513px">Gulpfile JS</div>
<div style="left:1px;top:1240px;width:1px;height:2px;background:#bdbdbd"></div><div style="left:3px;top:1242px;width:2px;height:1px;background:#bdbdbd"></div><div style="left:2084px;top:1240px;width:1px;height:2px;background:#bdbdbd"></div><div style="left:2081px;top:1242px;width:2px;height:1px;background:#bdbdbd"></div>
</div>
</body></html>
